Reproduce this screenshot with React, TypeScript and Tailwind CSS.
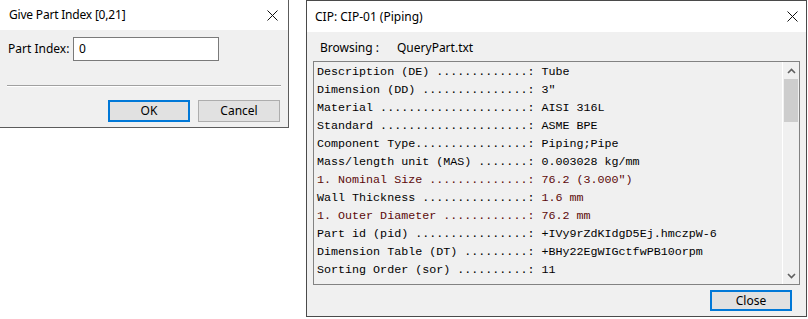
import React from "react";

const ui = { fontFamily: '"Noto Sans", "Open Sans", Arial, sans-serif' };
const mono = { fontFamily: '"Liberation Mono", "Courier New", monospace' };

function CloseX() {
  return (
    <svg width="11" height="11" viewBox="0 0 11 11">
      <path d="M0.5 0.5 L10.5 10.5 M10.5 0.5 L0.5 10.5" stroke="#111" strokeWidth="1" fill="none" />
    </svg>
  );
}

const lines: { l: string; v: string; lc?: boolean; vc?: boolean }[] = [
  { l: "Description (DE) .............: ", v: "Tube" },
  { l: "Dimension (DD) ...............: ", v: '3"' },
  { l: "Material .....................: ", v: "AISI 316L" },
  { l: "Standard .....................: ", v: "ASME BPE" },
  { l: "Component Type................: ", v: "Piping;Pipe" },
  { l: "Mass/length unit (MAS) .......: ", v: "0.003028 kg/mm" },
  { l: "1. Nominal Size ..............: ", v: '76.2 (3.000")', lc: true, vc: true },
  { l: "Wall Thickness ...............: ", v: "1.6 mm", vc: true },
  { l: "1. Outer Diameter ............: ", v: "76.2 mm", lc: true, vc: true },
  { l: "Part id (pid) ................: ", v: "+IVy9rZdKIdgD5Ej.hmczpW-6" },
  { l: "Dimension Table (DT) .........: ", v: "+BHy22EgWIGctfwPB10orpm" },
  { l: "Sorting Order (sor) ..........: ", v: "11" },
];

export default function App() {
  return (
    <div className="w-[808px] h-[319px] bg-white flex items-start overflow-hidden text-[12px] text-black" style={ui}>
      {/* Left dialog */}
      <div className="w-[289px] h-[128px] border-r border-b border-[#5c5c5c] bg-[#f0f0f0] flex flex-col">
        <div className="h-[30px] bg-white flex items-center justify-between pl-[9px] pr-[10px]">
          <span className="text-[12px] tracking-[-0.2px]">Give Part Index [0,21]</span>
          <CloseX />
        </div>
        <div className="flex items-center pt-[7px] pl-[8px]">
          <span className="w-[65px]">Part Index:</span>
          <div className="w-[146px] h-[24px] bg-white border border-[#7a7a7a] flex items-center pl-[5px]">0</div>
        </div>
        <div className="mt-[24px] mx-[7px] h-[2px] border-t border-[#a0a0a0] border-b border-b-white" />
        <div className="flex justify-end gap-[8px] pr-[8px] mt-[13px]">
          <button className="w-[82px] h-[22px] bg-[#e1e1e1] border-2 border-[#0078d7] flex items-center justify-center">OK</button>
          <button className="w-[82px] h-[22px] bg-[#e1e1e1] border border-[#adadad] flex items-center justify-center">Cancel</button>
        </div>
      </div>

      {/* Right dialog */}
      <div className="ml-[17px] w-[501px] h-[317px] border border-[#4a4a4a] bg-[#f0f0f0] flex flex-col">
        <div className="h-[31px] bg-white flex items-center justify-between pl-[8px] pr-[8px]">
          <span>CIP: CIP-01 (Piping)</span>
          <CloseX />
        </div>
        <div className="flex items-center h-[29px] pl-[13px] pt-[2px]">
          <span className="w-[77px]">Browsing :</span>
          <span>QueryPart.txt</span>
        </div>
        <div className="mx-[6px] h-[224px] border border-[#828282] flex">
          <div className="flex-1 pt-[1px] pl-[3px] text-[11.7px] leading-[18px] text-black" style={mono}>
            {lines.map((x, i) => (
              <div key={i} className="whitespace-pre">
                <span className={x.lc ? "text-[#5c0a0a]" : ""}>{x.l}</span>
                <span className={x.vc ? "text-[#5c0a0a]" : ""}>{x.v}</span>
              </div>
            ))}
          </div>
          <div className="w-[17px] border-l border-white bg-[#f0f0f0] flex flex-col">
            <div className="h-[17px] flex items-center justify-center">
              <svg width="9" height="6" viewBox="0 0 9 6"><path d="M1 5 L4.5 1.5 L8 5" stroke="#606060" strokeWidth="1.6" fill="none" /></svg>
            </div>
            <div className="mx-[1px] h-[43px] bg-[#cdcdcd]" />
            <div className="flex-1" />
            <div className="h-[17px] flex items-center justify-center">
              <svg width="9" height="6" viewBox="0 0 9 6"><path d="M1 1 L4.5 4.5 L8 1" stroke="#606060" strokeWidth="1.6" fill="none" /></svg>
            </div>
          </div>
        </div>
        <div className="flex justify-end pr-[14px] mt-[5px]">
          <button className="w-[82px] h-[21px] bg-[#e1e1e1] border-2 border-[#0078d7] flex items-center justify-center">Close</button>
        </div>
      </div>
    </div>
  );
}
